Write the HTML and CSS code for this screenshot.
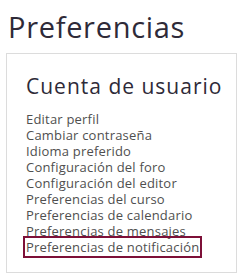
FILE: index.html
```html
<!DOCTYPE html>
<html lang="es">
<head>
  <meta charset="UTF-8">
  <title>Preferencias</title>
  <link rel="stylesheet" href="styles.css">
</head>
<body>
  <h1 class="page-title">Preferencias</h1>
  <div class="card">
    <h2 class="card-title">Cuenta de usuario</h2>
    <ul class="links">
      <li><a href="#">Editar perfil</a></li>
      <li><a href="#">Cambiar contraseña</a></li>
      <li><a href="#">Idioma preferido</a></li>
      <li><a href="#">Configuración del foro</a></li>
      <li><a href="#">Configuración del editor</a></li>
      <li><a href="#">Preferencias del curso</a></li>
      <li><a href="#">Preferencias de calendario</a></li>
      <li><a href="#">Preferencias de mensajes</a></li>
      <li><a href="#" class="focused">Preferencias de notificación</a></li>
    </ul>
  </div>
</body>
</html>
```
FILE: styles.css
```css
body {
  margin: 0;
  background: #fff;
  font-family: "Open Sans", sans-serif;
  overflow: hidden;
}
.page-title {
  margin: 0;
  padding: 9px 0 0 8px;
  height: 45px;
  box-sizing: border-box;
  font-family: "Open Sans", sans-serif;
  font-weight: 400;
  font-size: 29px;
  line-height: 36px;
  letter-spacing: 0.7px;
  color: #2e2a38;
}
.card {
  margin: 8px 0 0 6px;
  width: 231px;
  height: 220px;
  box-sizing: border-box;
  border: 1px solid #dcdcdc;
  padding: 20px 0 0 19px;
}
.card-title {
  margin: 0 0 13px;
  font-weight: 400;
  font-size: 21px;
  line-height: 24px;
  letter-spacing: 1px;
  color: #2e2a38;
}
.links {
  list-style: none;
  margin: 0;
  padding: 0;
}
.links li {
  font-size: 13px;
  line-height: 16px;
  letter-spacing: 0.2px;
}
.links a {
  color: #4f4f4f;
  text-decoration: none;
}
.links a.focused {
  outline: 2px solid #7d1038;
  outline-offset: 0;
  padding: 0 1px;
  margin-left: -1px;
}
```
